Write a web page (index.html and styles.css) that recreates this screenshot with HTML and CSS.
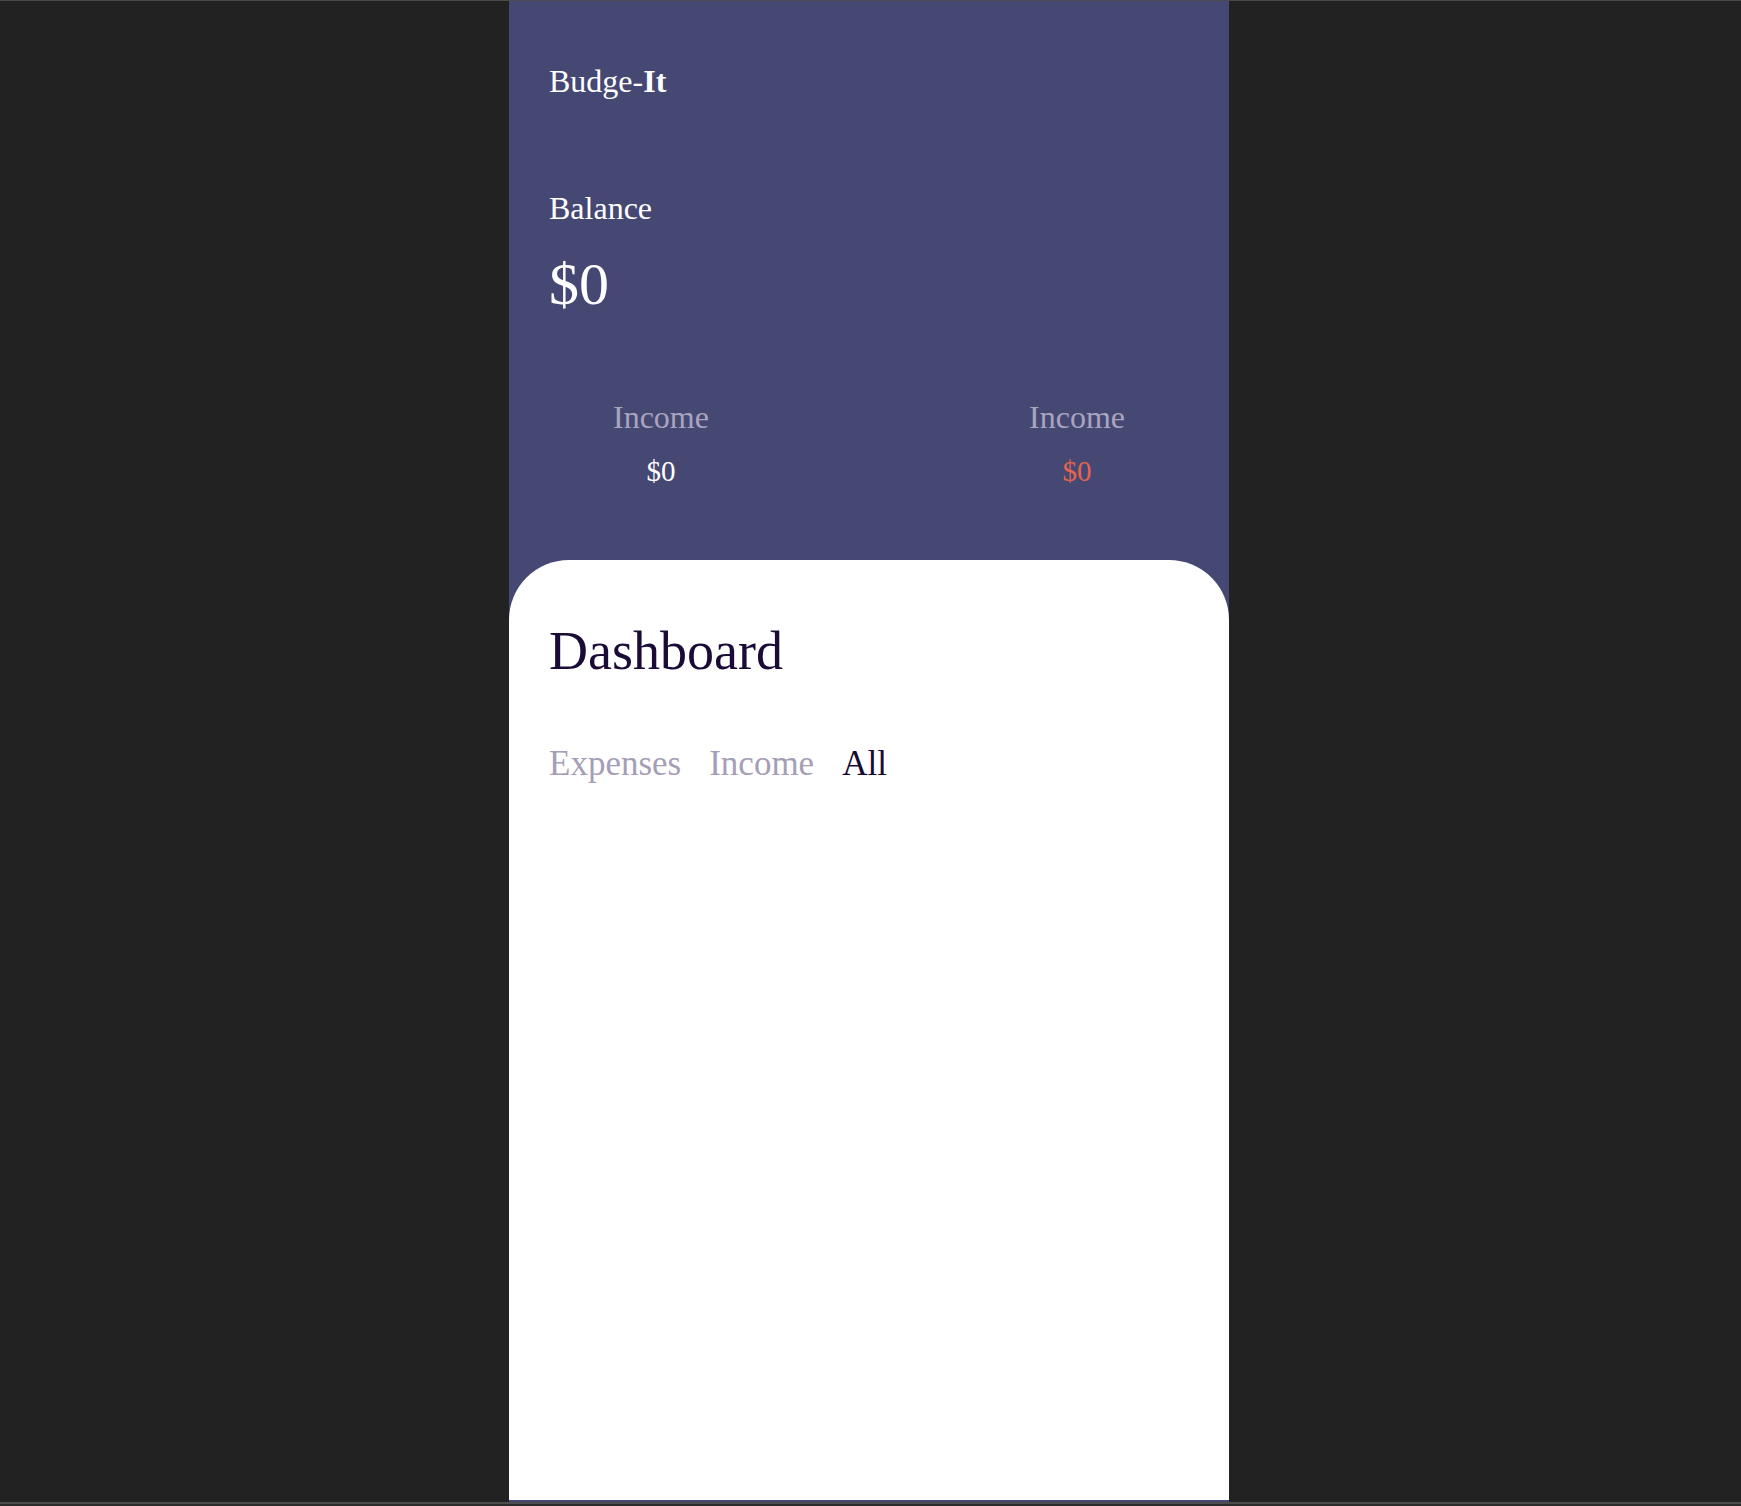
FILE: index.html
```html
<!DOCTYPE html>
<html lang="en">
<head>
<meta charset="utf-8">
<title>Budge-It</title>
<link rel="stylesheet" href="styles.css">
</head>
<body>
<div class="topline"></div>
<div class="app">
  <header class="header">
    <h1 class="logo">Budge-<b class="logo-strong">It</b></h1>
    <div class="balance">
      <h2 class="balance-label">Balance</h2>
      <p class="balance-value">$0</p>
    </div>
    <div class="stats">
      <div class="stat">
        <span class="stat-label">Income</span>
        <span class="stat-value">$0</span>
      </div>
      <div class="stat">
        <span class="stat-label">Income</span>
        <span class="stat-value stat-value-expense">$0</span>
      </div>
    </div>
  </header>
  <main class="card">
    <h2 class="card-title">Dashboard</h2>
    <nav class="tabs">
      <span class="tab">Expenses</span>
      <span class="tab">Income</span>
      <span class="tab tab-active">All</span>
    </nav>
  </main>
</div>
<div class="bottomline"></div>
</body>
</html>
```

FILE: styles.css
```css
html, body {
  margin: 0;
  padding: 0;
}
body {
  background: #222222;
  height: 100vh;
  display: flex;
  flex-direction: column;
  padding-right: 3px;
  box-sizing: border-box;
  font-family: "Liberation Serif", "Times New Roman", serif;
}
.topline {
  height: 1px;
  background: #4a4a4a;
  flex: none;
  margin-right: -3px;
}
.bottomline {
  height: 4px;
  flex: none;
  margin-right: -3px;
  background: linear-gradient(#4c4c4c 0 2px, #2b2b2b 2px 4px);
}
.app {
  flex: 1;
  width: 720px;
  margin: 0 auto;
  background: #464874;
  display: flex;
  flex-direction: column;
  padding-bottom: 2px;
  box-sizing: border-box;
}
.header {
  padding: 64px 40px 0;
  color: #ffffff;
}
.logo {
  margin: 0;
  font-size: 32px;
  line-height: 32px;
  font-weight: normal;
}
.logo-strong {
  font-weight: bold;
}
.balance {
  margin-top: 95px;
}
.balance-label {
  margin: 0;
  font-size: 32px;
  line-height: 32px;
  font-weight: normal;
}
.balance-value {
  margin: 30px 0 0;
  font-size: 60px;
  line-height: 60px;
}
.stats {
  margin-top: 87px;
  padding: 0 64px;
  display: flex;
  justify-content: space-between;
}
.stat {
  display: flex;
  flex-direction: column;
  align-items: center;
}
.stat-label {
  font-size: 32px;
  line-height: 32px;
  color: #a9a4bf;
}
.stat-value {
  margin-top: 24px;
  font-size: 29px;
  line-height: 29px;
  color: #ffffff;
}
.stat-value-expense {
  color: #e2654d;
}
.card {
  flex: 1;
  margin-top: 74px;
  background: #ffffff;
  border-radius: 60px 60px 0 0;
  padding: 64px 40px 0;
}
.card-title {
  margin: 0;
  font-size: 54px;
  line-height: 54px;
  font-weight: normal;
  color: #1a0c36;
}
.tabs {
  margin-top: 68px;
  display: flex;
  gap: 28px;
}
.tab {
  font-size: 35px;
  line-height: 35px;
  color: #a69eb7;
}
.tab-active {
  color: #170b35;
}
```
